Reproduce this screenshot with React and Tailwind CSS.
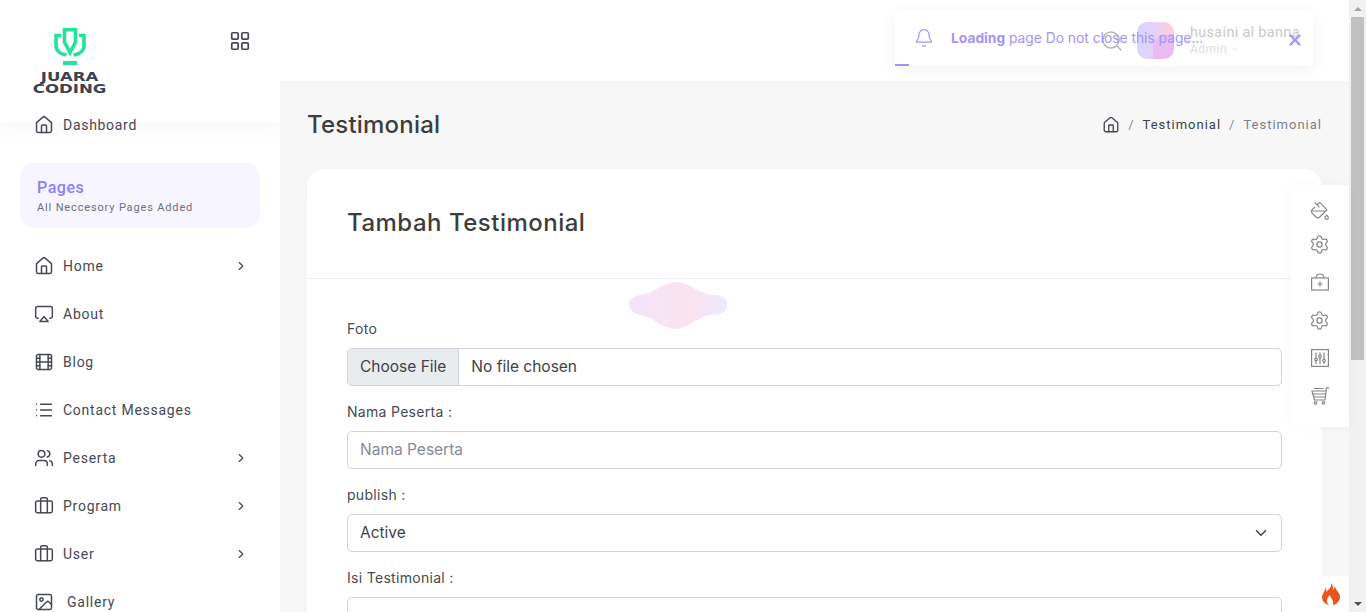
import React from "react";
import { ChevronRight, ChevronDown, Home, Film, List, Users, Briefcase, Image, Bell, Search, X, PaintBucket, Settings, LayoutGrid, Airplay } from "lucide-react";

const nav = [
  [Home, "Home", true],
  [Airplay, "About", false],
  [Film, "Blog", false],
  [List, "Contact Messages", false],
  [Users, "Peserta", true],
  [Briefcase, "Program", true],
  [Briefcase, "User", true],
  [Image, "Gallery", false],
];

function Logo() {
  return (
    <div className="flex flex-col items-center w-[72px]">
      <svg width="32" height="37" viewBox="0 0 32 37" fill="none">
        <path d="M7 7.500H2V18C2 23 7 26 12.500 27" stroke="#22e39a" strokeWidth="3.600" />
        <path d="M25 7.500H30V18C30 23 25 26 19.500 27" stroke="#22e39a" strokeWidth="3.600" />
        <path d="M10.500 1.800H21.500V14L16 24.500L10.500 14Z" stroke="#22e39a" strokeWidth="3.600" />
        <rect x="9" y="33" width="14" height="4" fill="#22e39a" />
      </svg>
      <div className="mt-[7px] font-['DejaVu_Sans'] font-bold text-[#3b4250] text-[11.500px] leading-[11.500px] text-center scale-x-[1.44] whitespace-nowrap">JUARA<br />CODING</div>
    </div>
  );
}

function Kit() {
  return (
    <svg width="18" height="18" viewBox="0 0 18 18" fill="none" stroke="currentColor" strokeWidth="1.200">
      <rect x="0.600" y="5" width="16.800" height="12" />
      <path d="M5 5C5 2 7 1 9 1C11 1 13 2 13 5" />
      <path d="M9 8.500V13.500M6.500 11H11.500" />
    </svg>
  );
}

function Mixer() {
  return (
    <svg width="18" height="18" viewBox="0 0 18 18" fill="none" stroke="currentColor" strokeWidth="1.200">
      <rect x="0.600" y="0.600" width="16.800" height="16.800" />
      <path d="M5 3.500V9M5 12V15M9 3.500V6M9 9V15M13 3.500V10M13 13V15" />
      <circle cx="5" cy="10.500" r="1.300" />
      <circle cx="9" cy="7.500" r="1.300" />
      <circle cx="13" cy="11.500" r="1.300" />
    </svg>
  );
}

function Cart() {
  return (
    <svg width="18" height="18" viewBox="0 0 18 18" fill="none" stroke="currentColor" strokeWidth="1.200">
      <path d="M18 0.800H15.500L14 13H3.500L1 4H14.800" />
      <path d="M3 1.500H12.500M2 7H14.300M3 10H14" />
      <circle cx="4.500" cy="15.800" r="1.300" />
      <circle cx="12.500" cy="15.800" r="1.300" />
    </svg>
  );
}

export default function App() {
  return (
    <div className="relative flex w-[1366px] h-[612px] overflow-hidden bg-[#f7f7f7] font-['Roboto',sans-serif] text-[#464a53]">
      <aside className="w-[280px] shrink-0 h-full bg-white flex flex-col overflow-hidden relative">
        <div className="h-[122px] shrink-0 bg-white shadow-[0_8px_20px_rgba(0,0,0,0.03)] flex items-start justify-between pl-[34px] pr-[30px] pt-[28px] relative">
          <Logo />
          <LayoutGrid className="w-[22px] h-[22px] mt-[2px] -mr-[1px] text-[#464a53]" strokeWidth={1.900} />
          <div className="absolute left-[34px] top-[115px] flex items-center gap-[9px] text-[14px] tracking-[0.7px] leading-5">
            <Home className="w-[20px] h-[20px]" strokeWidth={1.800} />
            <span>Dashboard</span>
          </div>
        </div>
        <div className="mx-[20px] mt-[41px] h-[65px] shrink-0 rounded-[14px] bg-[#f7f5ff] pl-[17px] pt-[14px]">
          <div className="text-[16px] leading-[21px] font-medium text-[#8b7ffb] tracking-[0.55px]">Pages</div>
          <div className="text-[11px] leading-[15px] mt-[2px] text-[#6e7179] tracking-[0.85px]">All Neccesory Pages Added</div>
        </div>
        <nav className="mt-[14px] flex flex-col">
          {nav.map(([Icon, label, arrow]) => (
            <div key={label} className="h-[48px] shrink-0 flex items-center pl-[34px] pr-[32px] text-[14px] tracking-[0.75px]">
              <Icon className="w-[20px] h-[20px] shrink-0" strokeWidth={1.800} />
              <span className={label === "Gallery" ? "ml-[13px]" : "ml-[9px]"}>{label}</span>
              {arrow && <ChevronRight className="w-[14px] h-[14px] ml-auto" strokeWidth={2} />}
            </div>
          ))}
        </nav>
      </aside>

      <div className="flex-1 min-w-0 flex flex-col h-full">
        <header className="h-[81px] shrink-0 bg-white shadow-[0_2px_8px_rgba(0,0,0,0.02)] flex items-center pl-[820px]">
          <Search className="w-[24px] h-[24px] text-[#6b6b6b]" strokeWidth={1.500} />
          <div className="relative ml-[13px] w-[37px] h-[37px] rounded-[10px] bg-gradient-to-r from-[#b3adff] via-[#c9a0f0] to-[#ff9ba8] overflow-hidden">
            <div className="absolute left-[16px] top-[12px] w-[21px] h-[25px] rounded-tl-[14px] bg-[#d578e0]" />
          </div>
          <div className="ml-[16px] -mt-[1px]">
            <div className="text-[14.500px] leading-[17px] text-[#919191] tracking-[0.3px] whitespace-nowrap">husaini al banna</div>
            <div className="text-[12px] leading-[15px] mt-[1px] text-[#bbbbbb] tracking-[0.5px] flex items-center gap-[3px]">Admin <ChevronDown className="w-[10px] h-[10px]" /></div>
          </div>
        </header>
        <div className="flex items-center justify-between pl-[27px] pr-[27px] pt-[27px]">
          <h1 className="text-[24px] leading-[34px] font-medium font-['Inter',sans-serif] text-[#3d3d3d] tracking-[0.2px]">Testimonial</h1>
          <div className="flex items-center text-[13px] tracking-[1px] leading-5">
            <Home className="w-[18px] h-[18px]" strokeWidth={1.800} />
            <span className="mx-[8px] text-[#8a8d93]">/</span>
            <span className="text-[#3f4249]">Testimonial</span>
            <span className="mx-[8px] text-[#8a8d93]">/</span>
            <span className="text-[#7d8087]">Testimonial</span>
          </div>
        </div>
        <main className="mx-[27px] mt-[27px] bg-white rounded-t-[18px] flex-1 shadow-[0_0_20px_rgba(0,0,0,0.02)]">
          <div className="h-[110px] border-b border-[#eef2f7] pl-[40px] pt-[38px]">
            <h2 className="text-[24px] leading-[32px] font-medium font-['Inter',sans-serif] text-[#3d3d3d] tracking-[0.5px]">Tambah Testimonial</h2>
          </div>
          <form className="px-[40px] pt-[41px] text-[#464a53] font-['Inter',sans-serif]">
            <label className="block text-[14px] leading-[18px] tracking-[0.3px]">Foto</label>
            <div className="mt-[10px] h-[38px] flex items-center border border-[#ced4da] rounded-[5px] text-[15.500px] text-[#3f4249] overflow-hidden">
              <span className="h-full flex items-center px-[12px] bg-[#e9ecef] border-r border-[#ced4da]">Choose File</span>
              <span className="pl-[12px]">No file chosen</span>
            </div>
            <label className="block mt-[17px] text-[14px] leading-[18px] tracking-[0.3px]">Nama Peserta :</label>
            <div className="mt-[10px] h-[38px] flex items-center border border-[#ced4da] rounded-[5px] px-[12px] text-[15.500px] text-[#858b94]">Nama Peserta</div>
            <label className="block mt-[17px] text-[14px] leading-[18px] tracking-[0.3px]">publish :</label>
            <div className="mt-[10px] h-[38px] flex items-center justify-between border border-[#ced4da] rounded-[5px] pl-[12px] pr-[11px] text-[15.500px] text-[#3f4249]">
              <span>Active</span>
              <ChevronDown className="w-[18px] h-[18px]" strokeWidth={2} />
            </div>
            <label className="block mt-[17px] text-[14px] leading-[18px] tracking-[0.3px]">Isi Testimonial :</label>
            <div className="mt-[10px] h-[60px] border border-[#ced4da] rounded-[5px]" />
          </form>
        </main>
      </div>

      <div className="w-[17px] shrink-0 h-full bg-[#f1f1f1] flex flex-col items-center">
        <div className="h-[17px] w-full flex items-center justify-center"><div className="w-0 h-0 border-x-[4px] border-x-transparent border-b-[4px] border-b-[#a3a3a3]" /></div>
        <div className="w-[13px] h-[343px] bg-[#c1c1c1]" />
        <div className="mt-auto h-[17px] w-full flex items-center justify-center"><div className="w-0 h-0 border-x-[4px] border-x-transparent border-t-[4px] border-t-[#505050]" /></div>
      </div>

      {/* toast */}
      <div className="absolute left-[895px] top-[10px] w-[418px] h-[56px] rounded-[4px] bg-white/50 shadow-[0_4px_16px_rgba(0,0,0,0.06)] flex items-center text-[#a294fb] text-[13.800px] font-['Inter',sans-serif]">
        <Bell className="w-[20px] h-[20px] ml-[19px] shrink-0" strokeWidth={1.500} />
        <span className="ml-[17px] mt-[1px] whitespace-nowrap"><b className="font-bold">Loading</b> page Do not close this page...</span>
        <X className="absolute right-[9px] top-[21px] w-[18px] h-[18px]" strokeWidth={3} />
        <div className="absolute left-0 bottom-0 w-[14px] h-[2px] bg-[#a294fb]" />
      </div>

      {/* blob */}
      <svg className="absolute left-[629px] top-[282px]" width="98" height="48" viewBox="0 0 98 48">
        <defs>
          <linearGradient id="blob" x1="0" x2="1" y1="0" y2="0">
            <stop offset="0" stopColor="#f3e4fb" />
            <stop offset="0.6" stopColor="#fbe3ee" />
            <stop offset="1" stopColor="#efe9ff" />
          </linearGradient>
        </defs>
        <path d="M12 13C24 11 36 0 48 0C60 0 68 12 86 13C102 14 102 32 88 32C70 32 60 47 47 47C34 47 24 35 12 33C-4 30 -4 15 12 13Z" fill="url(#blob)" />
      </svg>

      {/* right toolbar */}
      <div className="absolute left-[1291px] top-[185px] w-[58px] h-[242px] bg-white rounded-l-[6px] flex flex-col items-center pt-[15px] text-[#858585] shadow-[0_0_12px_rgba(0,0,0,0.03)]">
        <div className="h-[22px] flex items-center justify-center"><PaintBucket className="w-[20px] h-[20px]" strokeWidth={1.400} /></div>
        <div className="h-[22px] mt-[11px] flex items-center justify-center"><Settings className="w-[21px] h-[21px] -ml-[1px]" strokeWidth={1.400} /></div>
        <div className="h-[22px] mt-[16px] flex items-center justify-center"><Kit /></div>
        <div className="h-[22px] mt-[16px] flex items-center justify-center"><Settings className="w-[21px] h-[21px] -ml-[1px]" strokeWidth={1.400} /></div>
        <div className="h-[22px] mt-[16px] flex items-center justify-center"><Mixer /></div>
        <div className="h-[22px] mt-[16px] flex items-center justify-center"><Cart /></div>
      </div>

      {/* CI flame */}
      <div className="absolute left-[1313px] top-[576px] w-[36px] h-[36px] bg-white flex items-center justify-center">
        <svg width="18" height="22" viewBox="0 0 18 22">
          <path d="M9 0C10 4 7 6 4 9C5 7 4 6 3 5C3 9 0 11 0 14C0 18 3 21 7 22C4 19 4 16 8 12C8 15 12 16 11 22C15 21 18 18 18 14C18 9 13 7 13 3C12 5 12 6 11 7C11 4 11 2 9 0Z" fill="#e9541a" />
        </svg>
      </div>
    </div>
  );
}
